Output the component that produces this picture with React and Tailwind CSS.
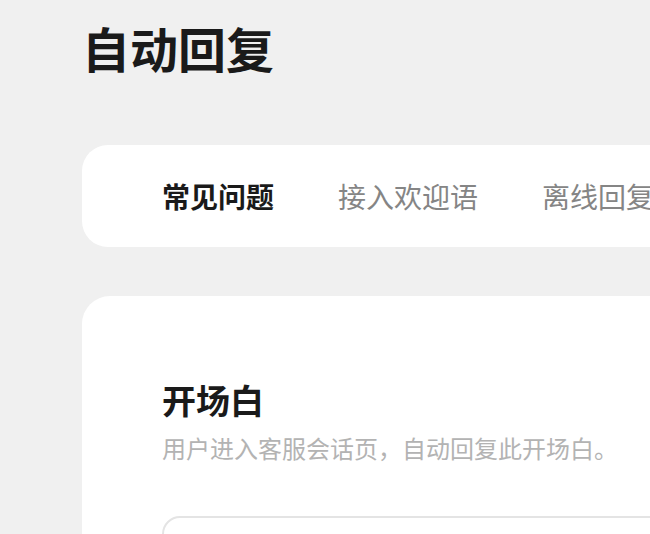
const tabs = ['常见问题', '接入欢迎语', '离线回复', '转人工'];

const App = () => {
  return (
    <div className="h-screen w-full overflow-hidden bg-[#f0f0f0] font-['Noto_Sans_CJK_SC','Noto_Sans',sans-serif]">
      <div className="w-[1200px] pl-[82px] pt-[19px]">
        <h1 className="text-[48px] leading-[56px] font-bold text-[#1a1a1a]">自动回复</h1>

        <div className="mt-[70px] h-[102px] rounded-[26px] bg-white pl-[80px] flex items-center gap-[64px]">
          {tabs.map((t, i) => (
            <span
              key={t}
              className={
                i === 0
                  ? 'text-[28px] leading-[36px] font-bold text-[#1a1a1a]'
                  : 'text-[28px] leading-[36px] text-[#858585]'
              }
            >
              {t}
            </span>
          ))}
        </div>

        <div className="mt-[49px] h-[400px] rounded-[28px] bg-white pl-[80px] pt-[84px]">
          <h2 className="text-[34px] leading-[40px] font-bold text-[#1a1a1a]">开场白</h2>
          <p className="mt-[12px] text-[24px] leading-[32px] text-[#b3b3b3]">
            用户进入客服会话页，自动回复此开场白。
          </p>
          <div className="mt-[52px] h-[160px] w-[900px] rounded-[18px] border-2 border-[#e4e4e4]"></div>
        </div>
      </div>
    </div>
  );
};

export default App;
